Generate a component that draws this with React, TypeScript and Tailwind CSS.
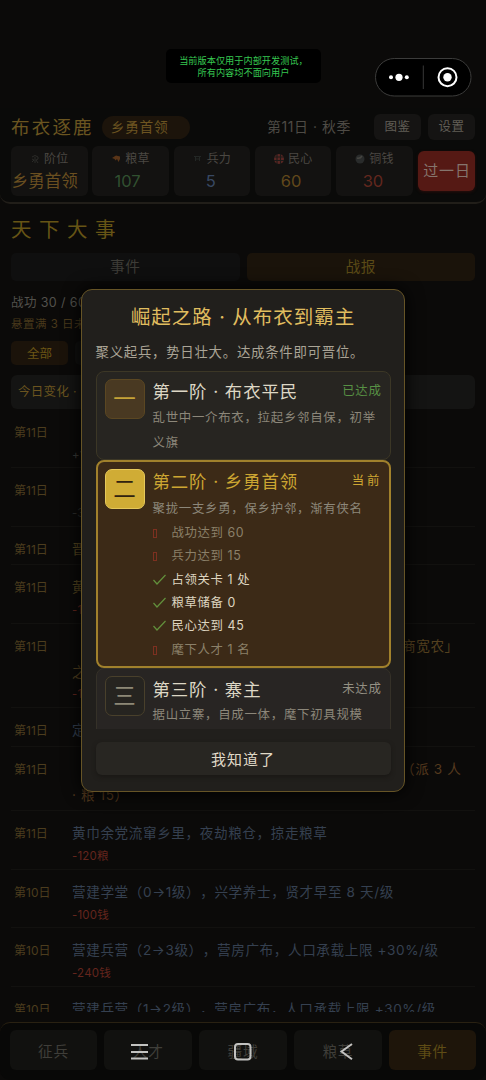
import React from "react";

type Line = { text: string; offset?: string };
type Log = { day: string; lines: Line[]; note?: string; tone: string; noteTone?: string };

const RED = "text-[#64251d]";
const BLUE = "text-[#354050]";
const logs: Log[] = [
  { day: "第11日", lines: [], note: "+1", tone: BLUE, noteTone: "text-[#3a3a36]" },
  { day: "第11日", lines: [], note: "-3", tone: BLUE, noteTone: "text-[#2c2c2a]" },
  { day: "第11日", lines: [{ text: "晋" }], tone: "text-[#54441e]" },
  { day: "第11日", lines: [{ text: "黄" }], note: "-1", tone: "text-[#54441e]", noteTone: RED },
  { day: "第11日", lines: [{ text: "商宽农」", offset: "pl-[330px]" }, { text: "之" }], note: "-1", tone: "text-[#54401f]", noteTone: RED },
  { day: "第11日", lines: [{ text: "定" }], tone: BLUE },
  { day: "第11日", lines: [{ text: "（派 3 人", offset: "pl-[329px]" }, { text: "· 粮 15）" }], tone: "text-[#54391e]" },
  { day: "第11日", lines: [{ text: "黄巾余党流窜乡里，夜劫粮仓，掠走粮草" }], note: "-120粮", tone: BLUE, noteTone: RED },
  { day: "第10日", lines: [{ text: "营建学堂（0→1级），兴学养士，贤才早至 8 天/级" }], note: "-100钱", tone: BLUE, noteTone: RED },
  { day: "第10日", lines: [{ text: "营建兵营（2→3级），营房广布，人口承载上限 +30%/级" }], note: "-240钱", tone: BLUE, noteTone: RED },
  { day: "第10日", lines: [{ text: "营建兵营（1→2级），营房广布，人口承载上限 +30%/级" }], tone: BLUE },
];

const stats = [
  { label: "阶位", value: "乡勇首领", tone: "text-[#6a4f20] pr-[9px]" },
  { label: "粮草", value: "107", tone: "text-[#315030] pr-[6px]" },
  { label: "兵力", value: "5", tone: "text-[#384862] pr-[2px]" },
  { label: "民心", value: "60", tone: "text-[#61481b] pr-[4px]" },
  { label: "铜钱", value: "30", tone: "text-[#62271e] pr-[3px]" },
];

function StatIcon({ index }: { index: number }) {
  return (
    <svg viewBox="0 0 10 10" className="size-[10px] shrink-0">
      {index === 0 && <path d="M2 3q3-3 6 0v2l-2 1 2 3M5 3v6M2 5l2 1-2 2" fill="none" stroke="#2b2b28" />}
      {index === 1 && <path d="M1 4 5 1.5l4 1v2.5L7.5 8 6 5 4.5 6.5 3.5 5z" fill="#5a3518" />}
      {index === 2 && <path d="M1 2.5h7M2.5 5h4M2.5 3v4M6.5 2.5v4.5" fill="none" stroke="#232725" />}
      {index === 3 && (
        <g>
          <circle cx="5" cy="5" r="5" fill="#5a2623" />
          <path d="M0 3h10M0 6.5h10M3 0v10M6.5 0v10" stroke="#1d1a18" strokeWidth="1.1" />
        </g>
      )}
      {index === 4 && (
        <g>
          <circle cx="5" cy="5" r="4.5" fill="#292b2b" />
          <path d="M2 4q3 1 5-2" stroke="#454541" strokeWidth="1.5" fill="none" />
        </g>
      )}
    </svg>
  );
}

function Header() {
  return (
    <header className="h-[96px] shrink-0 rounded-b-[10px] border-b-2 border-[#211e19] bg-[#0a0a09] px-[11px] pt-[6px]">
      <div className="flex h-[26px] items-center whitespace-nowrap">
        <h1 className="text-[18.5px] leading-[26px] tracking-[2.2px] text-[#6a5520]">布衣逐鹿</h1>
        <span className="ml-[8px] flex h-[23px] w-[88px] items-center rounded-full bg-[#1c140b] pl-[9px] text-[13.7px] tracking-[0.7px] text-[#6c5421]">乡勇首领</span>
        <span className="ml-auto mr-[23px] text-[13.9px] tracking-[0.6px] text-[#4e4b45]">第11日 · 秋季</span>
        <span className="flex h-[26px] w-[47px] items-center justify-center rounded-[6px] bg-[#151413] text-[12.5px] tracking-[0.4px] text-[#615e56]">图鉴</span>
        <span className="ml-[7px] flex h-[26px] w-[47px] items-center justify-center rounded-[6px] bg-[#151413] text-[12.5px] tracking-[0.4px] text-[#615e56]">设置</span>
      </div>
      <div className="mt-[6px] flex gap-[4.8px]">
        {stats.map((s, i) => (
          <div key={s.label} className="flex h-[50px] w-[76.5px] shrink-0 flex-col items-center rounded-[6px] bg-[#131211]">
            <div className="flex h-[25px] items-center gap-[4px] text-[12px] leading-[25px] tracking-[0.2px] text-[#4b4843]">
              <StatIcon index={i} />
              {s.label}
            </div>
            <div className={`text-[16.5px] leading-[20px] whitespace-nowrap ${s.tone}`}>{s.value}</div>
          </div>
        ))}
        <button className="ml-px mt-[5px] h-[40px] w-[57px] shrink-0 rounded-[6px] bg-[#551914] text-[15px] tracking-[0.8px] whitespace-nowrap text-[#85756d] shadow-[0_1px_3px_#2b0e0b]">过一日</button>
      </div>
    </header>
  );
}

function EventPage() {
  return (
    <main className="flex h-[808px] shrink-0 flex-col overflow-hidden px-[11px]">
      <h2 className="mt-[11px] shrink-0 text-[20.5px] leading-[30px] tracking-[7.5px] text-[#665415]">天下大事</h2>
      <div className="mt-[8px] flex h-[28px] shrink-0 gap-[7px] text-[14.7px] leading-[28px] tracking-[0.5px]">
        <div className="flex-1 rounded-[5px] bg-[#0f0f0f] text-center text-[#3d3c37]">事件</div>
        <div className="flex-1 rounded-[5px] bg-[#1a130a] text-center text-[#5a4a16]">战报</div>
      </div>
      <div className="mt-[10px] h-[22px] shrink-0 text-[12.5px] leading-[23px] tracking-[0.4px] text-[#52514c]">战功 30 / 60</div>
      <div className="h-[22px] shrink-0 text-[11.5px] leading-[22px] tracking-[0.5px] text-[#49391b]">悬置满 3 日未决</div>
      <div className="mt-[6px] flex h-[24px] shrink-0 gap-[7px] text-[12.5px] leading-[25px]">
        <div className="w-[57px] rounded-[5px] bg-[#1b130a] text-center text-[#6b5515]">全部</div>
        <div className="w-[57px] rounded-[5px] bg-[#10100f]" />
      </div>
      <div className="mt-[10px] h-[34px] shrink-0 rounded-[6px] bg-[#141413] pl-[7px] text-[12.5px] leading-[34px] tracking-[0.3px] text-[#6b541f]">今日变化 ·</div>
      <div className="flex flex-col pt-[0.8px]">
        {logs.map((log, i) => (
          <article key={i} className="flex border-b border-[#12110f] pl-[3px] pt-[10px] pb-[2px]">
            <time className="w-[58px] shrink-0 text-[12px] leading-[25.8px] text-[#4c3d1e]">{log.day}</time>
            <div className={`text-[13.6px] tracking-[0.6px] whitespace-nowrap ${log.tone}`}>
              {log.lines.length === 0 && <div className="h-[25.8px]" />}
              {log.lines.map((line) => (
                <p key={line.text} className={`h-[25.8px] leading-[25.8px] ${line.offset ?? ""}`}>{line.text}</p>
              ))}
              {log.note && <p className={`h-[19.6px] text-[11.5px] leading-[18px] tracking-[0.2px] ${log.noteTone}`}>{log.note}</p>}
            </div>
          </article>
        ))}
      </div>
    </main>
  );
}

function BottomNav() {
  const base = "flex h-[40px] flex-1 items-center justify-center rounded-[6px] pt-[4px] text-[14.7px] tracking-[0.7px]";
  return (
    <nav className="mt-[10px] flex h-[58px] shrink-0 gap-[7px] rounded-[10px] border-t border-[#292112] bg-[#080807] px-[9.5px] pt-[7px]">
      {["征兵", "人才", "疆域", "粮草"].map((t) => (
        <div key={t} className={`${base} bg-[#11110f] text-[#3f3e39]`}>{t}</div>
      ))}
      <div className={`${base} bg-[#1e150a] text-[#5f4c15]`}>事件</div>
    </nav>
  );
}

function Rank(props: { glyph: string; title: string; desc: string; status: string; kind: "done" | "current" | "locked"; children?: React.ReactNode }) {
  const box = {
    done: "h-[89px] border border-[#3c3726] bg-[#272521]",
    current: "mt-[0.5px] h-[207.5px] border-2 border-[#a1812c] bg-[#3c2a17]",
    locked: "mt-[0.5px] h-[90px] border border-[#353128] bg-[#282523]",
  }[props.kind];
  const icon = {
    done: "mt-[7px] border-[#5b4722] bg-[#493922] text-[#c5a437]",
    current: "mt-[7px] border-[#e6c85a] bg-[#d0ac35] text-[#30220f]",
    locked: "mt-[7px] border-[#49402b] bg-[#262420] text-[#8d8877]",
  }[props.kind];
  const head = { done: "pt-[7px] pb-px", current: "pt-[7px] pb-[2px]", locked: "pt-[8px]" }[props.kind];
  const title = props.kind === "current" ? "text-[#cda632]" : "text-[#ddd7c5]";
  const status = { done: "text-[#579044] tracking-[0.7px]", current: "text-[#cda632] tracking-[3px] -mr-[2px]", locked: "text-[#949083] tracking-[0.7px]" }[props.kind];
  return (
    <section className={`flex shrink-0 rounded-[8px] pr-[8px] ${props.kind === "current" ? "pl-[7px]" : "pl-[8px]"} ${box}`}>
      <div className={`flex size-[40px] shrink-0 items-center justify-center rounded-[7px] border text-[22.5px] leading-[38px] ${icon}`}>{props.glyph}</div>
      <div className="ml-[8px] min-w-0 flex-1">
        <div className={head}>
          <div className="flex h-[25px] items-center justify-between whitespace-nowrap">
            <h3 className={`text-[17.4px] leading-[25px] tracking-[0.9px] ${title}`}>{props.title}</h3>
            <span className={`text-[12.4px] ${status}`}>{props.status}</span>
          </div>
        </div>
        <p className="text-[12.4px] leading-[25px] tracking-[0.75px] text-[#8c877a]">{props.desc}</p>
        {props.children}
      </div>
    </section>
  );
}

const goals = [
  { text: "战功达到 60", met: false },
  { text: "兵力达到 15", met: false },
  { text: "占领关卡 1 处", met: true },
  { text: "粮草储备 0", met: true },
  { text: "民心达到 45", met: true },
  { text: "麾下人才 1 名", met: false },
];

function Dialog() {
  return (
    <div className="absolute left-[81px] top-[288.5px] flex h-[503px] w-[324px] flex-col rounded-[11px] border border-[#665426] bg-[#211f1c] px-[13.5px] shadow-[0_0_18px_#000]">
      <h2 className="mt-[12px] text-center text-[19.5px] leading-[30px] tracking-[1px] whitespace-nowrap text-[#e0bd5f]">崛起之路 · 从布衣到霸主</h2>
      <p className="mt-[8px] text-[13.4px] leading-[24px] tracking-[0.75px] whitespace-nowrap text-[#aaa496]">聚义起兵，势日壮大。达成条件即可晋位。</p>
      <div className="mt-[7px] flex h-[358.5px] flex-col overflow-hidden">
        <Rank kind="done" glyph="一" title="第一阶 · 布衣平民" status="已达成" desc="乱世中一介布衣，拉起乡邻自保，初举义旗" />
        <Rank kind="current" glyph="二" title="第二阶 · 乡勇首领" status="当前" desc="聚拢一支乡勇，保乡护邻，渐有侠名">
          <ul>
            {goals.map((g) => (
              <li key={g.text} className={`flex h-[23.3px] items-center text-[12.4px] leading-[23px] tracking-[0.6px] ${g.met ? "text-[#ded5c0]" : "text-[#8b8069]"}`}>
                <span className="w-[19px] shrink-0">
                  {g.met ? (
                    <svg viewBox="0 0 13 11" className="h-[11px] w-[13px]"><path d="M.5 6 4 10 12.5 1" fill="none" stroke="#62903c" strokeWidth="1.2" /></svg>
                  ) : (
                    <span className="mt-[2px] block h-[9px] w-[4px] border border-[#7d3020]" />
                  )}
                </span>
                {g.text}
              </li>
            ))}
          </ul>
        </Rank>
        <Rank kind="locked" glyph="三" title="第三阶 · 寨主" status="未达成" desc="据山立寨，自成一体，麾下初具规模" />
      </div>
      <button className="mt-[13px] h-[33px] rounded-[6px] bg-[#282622] pt-px text-[15px] leading-[33px] tracking-[1px] text-[#e0dac8] shadow-[0_2px_4px_#1a1815]">我知道了</button>
    </div>
  );
}

export default function App() {
  return (
    <div lang="zh-CN" className="relative flex h-[1080px] w-[486px] flex-col overflow-hidden bg-[#0b0a09] font-['Inter','Noto_Sans_CJK_SC',sans-serif] font-normal [text-spacing-trim:space-all]">
      <div className="h-[108px] shrink-0" />
      <Header />
      <EventPage />
      <BottomNav />

      <div className="absolute left-[166px] top-[49px] h-[34px] w-[155px] rounded-[5px] bg-black pt-[6px] text-center text-[9.2px] leading-[11.5px] whitespace-nowrap text-[#36c751]">
        当前版本仅用于内部开发测试，
        <br />
        所有内容均不面向用户
      </div>
      <svg viewBox="0 0 97 39" className="absolute left-[375px] top-[58px] h-[39px] w-[97px]">
        <rect x=".5" y=".5" width="95.5" height="37.5" rx="18.7" fill="#000" stroke="#3c3c3b" />
        <path d="M48.3 7.5v23.5" stroke="#373737" />
        <circle cx="16" cy="19.3" r="2" fill="#fff" />
        <circle cx="24" cy="19.3" r="3.6" fill="#fff" />
        <circle cx="31.8" cy="19.3" r="2" fill="#fff" />
        <circle cx="72.5" cy="19.2" r="9" fill="none" stroke="#fff" strokeWidth="2" />
        <circle cx="72.5" cy="19.2" r="4.2" fill="#fff" />
      </svg>

      <Dialog />

      <svg viewBox="0 0 230 24" className="absolute left-[128px] top-[1040px] h-[24px] w-[230px]" fill="none" stroke="#c2c2c0" strokeWidth="2">
        <path d="M3 5h17M3 12h17M3 18.5h17" />
        <rect x="107" y="4" width="15.5" height="15.5" rx="3" />
        <path d="m224 4-10.5 7.5L224 19.3" />
      </svg>
    </div>
  );
}
